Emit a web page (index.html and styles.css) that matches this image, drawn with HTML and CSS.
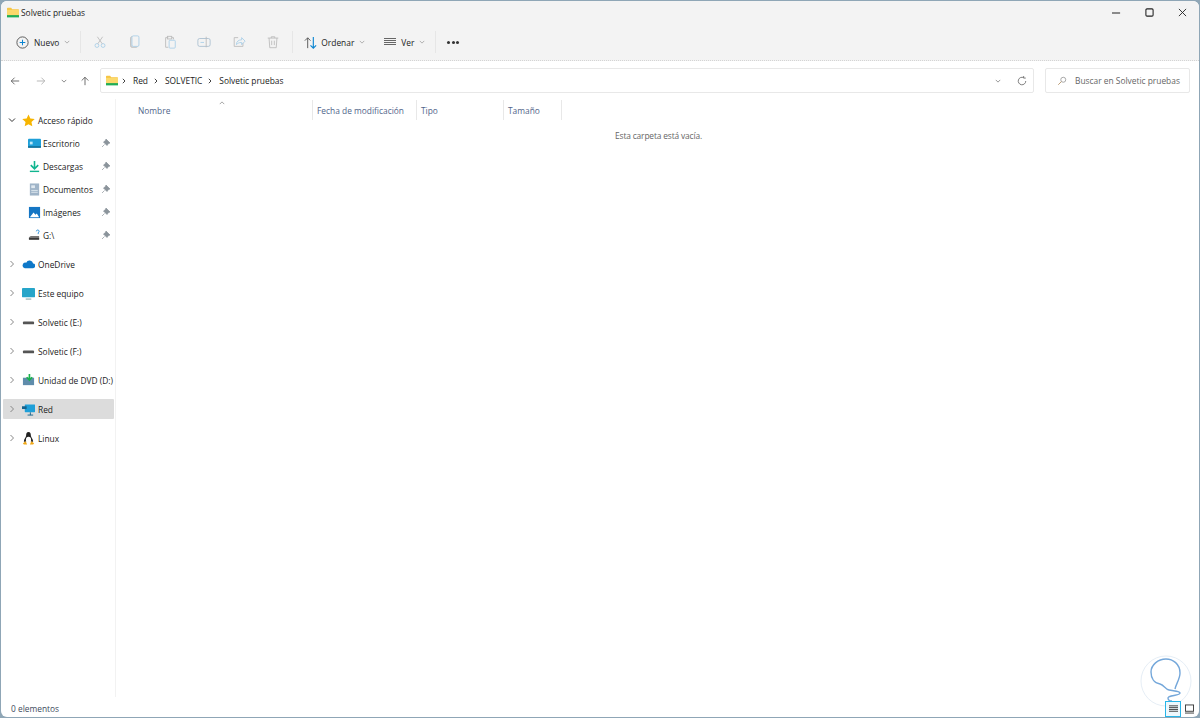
FILE: index.html
```html
<!DOCTYPE html>
<html lang="es">
<head>
<meta charset="utf-8">
<title>Solvetic pruebas</title>
<link rel="stylesheet" href="styles.css">
</head>
<body>
<div class="window">
  <header class="titlebar">
    <svg class="ti-folder" viewBox="0 0 16 14"><use href="#folder"/></svg>
    <span class="ti-text">Solvetic pruebas</span>
    <div class="winctl">
      <svg viewBox="0 0 10 10"><path d="M0 5.500h9" stroke="#222" stroke-width="1.200"/></svg>
      <svg viewBox="0 0 10 10"><rect x="1" y="1" width="8" height="8" rx="1.200" fill="none" stroke="#222" stroke-width="1.200"/></svg>
      <svg viewBox="0 0 10 10"><path d="M1 1l8 8M9 1l-8 8" stroke="#222" stroke-width="1"/></svg>
    </div>
  </header>

  <div class="toolbar">
    <div class="tb-btn new">
      <svg class="i16" viewBox="0 0 16 16"><circle cx="8" cy="8" r="6" fill="none" stroke="#555" stroke-width="1"/><path d="M8 5v6M5 8h6" stroke="#0a84d0" stroke-width="1.100"/></svg>
      <span>Nuevo</span><svg class="chev" viewBox="0 0 8 5"><path d="M1 1l3 3 3-3" fill="none" stroke="#999"/></svg>
    </div>
    <i class="sep sep1"></i>
    <div class="tb-icons">
      <svg viewBox="0 0 16 16" fill="none" stroke="#a9cfe8"><circle cx="4.500" cy="12" r="2.200"/><circle cx="11.500" cy="12" r="2.200"/><path d="M5.500 10L11 2M10.500 10L5 2" stroke="#bbb"/></svg>
      <svg viewBox="0 0 16 16" fill="none"><rect x="3" y="2" width="8" height="12" rx="1.500" stroke="#bbb" fill="#ddd"/><rect x="4.500" y="1" width="8" height="12" rx="1.500" stroke="#a9cfe8" fill="#f3f3f3"/></svg>
      <svg viewBox="0 0 16 16" fill="none"><path d="M6 3H3v11h3" stroke="#bbb"/><rect x="5" y="1.500" width="5" height="3" stroke="#bbb"/><path d="M10 3h2v2" stroke="#bbb"/><rect x="7" y="6" width="7" height="9" rx="1" stroke="#a9cfe8"/></svg>
      <svg viewBox="0 0 16 16" fill="none"><rect x="1" y="4" width="14" height="9" rx="2" stroke="#a9bfd0"/><path d="M4 8.500h4" stroke="#a9cfe8"/><path d="M10.500 2v12" stroke="#bbb"/></svg>
      <svg viewBox="0 0 16 16" fill="none"><path d="M7 3H2.500v10h10V9" stroke="#bbb"/><path d="M5 11c0-4 3-5.500 6-5.500V3l4 4-4 4V8.500c-3 0-4.500 1-6 2.500z" stroke="#a9cfe8"/></svg>
      <svg viewBox="0 0 16 16" fill="none" stroke="#bbb"><path d="M2 3.500h12M6 3.500V2h4v1.500M3.500 3.500l.8 11h7.400l.8-11M6.500 6.500v5M9.500 6.500v5"/></svg>
    </div>
    <i class="sep sep2"></i>
    <div class="tb-btn sort">
      <svg class="i16" viewBox="0 0 16 16" fill="none"><path d="M5 14V3M2 6l3-3 3 3" stroke="#555"/><path d="M11 2v12M8 11l3 3 3-3" stroke="#0a84d0" stroke-width="1.200"/></svg>
      <span>Ordenar</span><svg class="chev" viewBox="0 0 8 5"><path d="M1 1l3 3 3-3" fill="none" stroke="#999"/></svg>
    </div>
    <div class="tb-btn view">
      <svg class="wide" viewBox="0 0 14 10" fill="none" stroke="#666"><path d="M1 1.500h12M1 3.500h12M1 5.500h12M1 7.500h12"/></svg>
      <span>Ver</span><svg class="chev" viewBox="0 0 8 5"><path d="M1 1l3 3 3-3" fill="none" stroke="#999"/></svg>
    </div>
    <i class="sep sep3"></i>
    <div class="more"><b></b><b></b><b></b></div>
  </div>

  <nav class="navrow">
    <div class="arrows">
      <svg viewBox="0 0 12 12" fill="none" stroke="#555"><path d="M11 6H1.500M5.500 2l-4 4 4 4"/></svg>
      <svg class="dim" viewBox="0 0 12 12" fill="none" stroke="#aaa"><path d="M1 6h9.500M6.500 2l4 4-4 4"/></svg>
      <svg class="small" viewBox="0 0 8 5" fill="none" stroke="#666"><path d="M1 1l3 3 3-3"/></svg>
      <svg viewBox="0 0 12 12" fill="none" stroke="#555"><path d="M6 11V1.500M2 5.500l4-4 4 4"/></svg>
    </div>
    <div class="address">
      <svg class="ad-folder" viewBox="0 0 16 14"><use href="#folder"/></svg>
      <svg class="crumb" viewBox="0 0 4 6" fill="none" stroke="#444"><path d="M.8.8L3 3 .8 5.200"/></svg><span>Red</span>
      <svg class="crumb" viewBox="0 0 4 6" fill="none" stroke="#444"><path d="M.8.8L3 3 .8 5.200"/></svg><span>SOLVETIC</span>
      <svg class="crumb" viewBox="0 0 4 6" fill="none" stroke="#444"><path d="M.8.8L3 3 .8 5.200"/></svg><span>Solvetic pruebas</span>
      <span class="grow"></span>
      <svg class="ad-chev" viewBox="0 0 8 5" fill="none" stroke="#777"><path d="M1 1l3 3 3-3"/></svg>
      <svg class="ad-ref" viewBox="0 0 12 12" fill="none" stroke="#666"><path d="M10.500 6A4.500 4.500 0 1 1 8 2M8 0v2.500h2.500"/></svg>
    </div>
    <div class="search">
      <svg viewBox="0 0 12 12" fill="none" stroke="#999"><circle cx="7.500" cy="4.500" r="3"/><path d="M5.300 6.700L1.500 10.500" stroke="#b08a5a"/></svg>
      <span>Buscar en Solvetic pruebas</span>
    </div>
  </nav>

  <div class="body">
    <aside class="sidebar">
      <div class="row top first"><svg class="tw" viewBox="0 0 8 8" fill="none" stroke="#333"><path d="M1 2.500l3 3 3-3"/></svg>
        <svg class="ico" viewBox="0 0 14 14"><path d="M7 .5l2 4.300 4.700.6-3.500 3.200.9 4.700L7 11l-4.100 2.300.9-4.700L.3 5.400 5 4.800z" fill="#f7b500"/></svg><span>Acceso rápido</span></div>
      <div class="row sub"><svg class="ico" viewBox="0 0 14 14"><rect x="0" y="2" width="14" height="9.500" rx="1" fill="#1e9fd8"/><rect x="2" y="5" width="3" height="3" fill="#bfe8f8"/><rect y="10" width="14" height="1.500" fill="#12688f"/></svg><span class="lbl">Escritorio</span><svg class="pin" viewBox="0 0 10 10"><path d="M5 1l4 4-1.500.5L6 7.500 2.500 4 4.500 2.500zM3.500 6.500L1 9" fill="#8b949b" stroke="#8b949b" stroke-width=".7"/></svg></div>
      <div class="row sub"><svg class="ico" viewBox="0 0 14 14"><path d="M7 1v8M3 5.500L7 9.500l4-4" fill="none" stroke="#10b58f" stroke-width="1.700"/><rect x="2" y="11.500" width="10" height="1.500" fill="#10b58f"/></svg><span class="lbl">Descargas</span><svg class="pin" viewBox="0 0 10 10"><path d="M5 1l4 4-1.500.5L6 7.500 2.500 4 4.500 2.500zM3.500 6.500L1 9" fill="#8b949b" stroke="#8b949b" stroke-width=".7"/></svg></div>
      <div class="row sub"><svg class="ico" viewBox="0 0 14 14"><rect x="2" y=".5" width="10" height="13" fill="#9fb4c8"/><rect x="3.500" y="2.500" width="4" height="3" fill="#dfe8ef"/><path d="M3.500 8h7M3.500 10h7" stroke="#dfe8ef"/></svg><span class="lbl">Documentos</span><svg class="pin" viewBox="0 0 10 10"><path d="M5 1l4 4-1.500.5L6 7.500 2.500 4 4.500 2.500zM3.500 6.500L1 9" fill="#8b949b" stroke="#8b949b" stroke-width=".7"/></svg></div>
      <div class="row sub"><svg class="ico" viewBox="0 0 14 14"><rect x="1" y="1" width="12" height="12" fill="#1576c4"/><path d="M2 12l4-5 2 2.500 1.500-1.500L12 12z" fill="#fff"/></svg><span class="lbl">Imágenes</span><svg class="pin" viewBox="0 0 10 10"><path d="M5 1l4 4-1.500.5L6 7.500 2.500 4 4.500 2.500zM3.500 6.500L1 9" fill="#8b949b" stroke="#8b949b" stroke-width=".7"/></svg></div>
      <div class="row sub"><svg class="ico" viewBox="0 0 14 14"><path d="M1 9l2-1.500h9V11H1z" fill="#777"/><rect x="1" y="10" width="11" height="1.500" fill="#222"/><path d="M9 2.500a1.500 1.500 0 1 1 2 1.500v1.500" fill="none" stroke="#2a8fd8"/></svg><span class="lbl">G:\</span><svg class="pin" viewBox="0 0 10 10"><path d="M5 1l4 4-1.500.5L6 7.500 2.500 4 4.500 2.500zM3.500 6.500L1 9" fill="#8b949b" stroke="#8b949b" stroke-width=".7"/></svg></div>

      <div class="row top"><svg class="tw" viewBox="0 0 8 8" fill="none" stroke="#888"><path d="M2.500 1l3 3-3 3"/></svg><svg class="ico" viewBox="0 0 14 14"><path d="M3 11h8.500a2.500 2.500 0 0 0 .5-5A4 4 0 0 0 4.500 5 3 3 0 0 0 3 11z" fill="#0f78c8"/></svg><span>OneDrive</span></div>
      <div class="row top"><svg class="tw" viewBox="0 0 8 8" fill="none" stroke="#888"><path d="M2.500 1l3 3-3 3"/></svg><svg class="ico" viewBox="0 0 14 14"><rect x="0" y="1" width="14" height="10" rx=".5" fill="#26a5c9"/><path d="M4 13h6" stroke="#8aa" stroke-width="1.200"/></svg><span>Este equipo</span></div>
      <div class="row top"><svg class="tw" viewBox="0 0 8 8" fill="none" stroke="#888"><path d="M2.500 1l3 3-3 3"/></svg><svg class="ico" viewBox="0 0 14 14"><rect x="1" y="6" width="12" height="3" rx="1" fill="#555"/></svg><span>Solvetic (E:)</span></div>
      <div class="row top"><svg class="tw" viewBox="0 0 8 8" fill="none" stroke="#888"><path d="M2.500 1l3 3-3 3"/></svg><svg class="ico" viewBox="0 0 14 14"><rect x="1" y="6" width="12" height="3" rx="1" fill="#555"/></svg><span>Solvetic (F:)</span></div>
      <div class="row top"><svg class="tw" viewBox="0 0 8 8" fill="none" stroke="#888"><path d="M2.500 1l3 3-3 3"/></svg><svg class="ico" viewBox="0 0 14 14"><rect x="1" y="4" width="12" height="8" fill="#5f8cab"/><path d="M8 0v6M5 3.500L8 6.500 11 3.500" fill="none" stroke="#18b24c" stroke-width="1.800"/></svg><span>Unidad de DVD (D:)</span></div>
      <div class="row top sel"><svg class="tw" viewBox="0 0 8 8" fill="none" stroke="#888"><path d="M2.500 1l3 3-3 3"/></svg><svg class="ico" viewBox="0 0 14 14"><rect x="3" y="1.500" width="11" height="8.500" rx=".5" fill="#1e9fd8"/><rect x="0" y="3.500" width="5" height="3" fill="#13628c"/><path d="M6 13h6M9 10v3" stroke="#13628c"/></svg><span>Red</span></div>
      <div class="row top"><svg class="tw" viewBox="0 0 8 8" fill="none" stroke="#888"><path d="M2.500 1l3 3-3 3"/></svg><svg class="ico" viewBox="0 0 14 14"><path d="M7 0C5 0 4.500 1.500 4.500 3.500c0 2-2.500 4-2.500 7h10c0-3-2.500-5-2.500-7C9.500 1.500 9 0 7 0z" fill="#222"/><ellipse cx="7" cy="8.500" rx="2.800" ry="3.500" fill="#fff"/><path d="M1 12l3-2 1.500 3.500H2zM13 12l-3-2-1.500 3.500H12z" fill="#f0a818"/></svg><span>Linux</span></div>
    </aside>

    <main class="content">
      <svg class="sort-up" viewBox="0 0 8 5" fill="none" stroke="#888"><path d="M1 4l3-3 3 3"/></svg>
      <div class="cols">
        <div class="col c-name">Nombre</div>
        <div class="col c-date">Fecha de modificación</div>
        <div class="col c-type">Tipo</div>
        <div class="col c-size">Tamaño</div>
      </div>
      <p class="empty">Esta carpeta está vacía.</p>
    </main>
  </div>

  <footer class="status"><span>0 elementos</span></footer>
</div>

<svg class="watermark" viewBox="0 0 52 54" fill="none">
  <circle cx="26" cy="27" r="25" stroke="#e6eef6" stroke-width="1"/>
  <path d="M35 35C36 30 40 25 40 19C40 10 33 5 26 5C18 5 11 11 11 18C11 24 14 29 20 30C24 31 25 35 29 36C33 37 40 37 40 39C40 42 28 41 28 44C28 46 30 47 32 47" stroke="#74a7da" stroke-width="1.400"/>
</svg>
<div class="viewbtns">
  <div class="vb on"><svg viewBox="0 0 10 10" fill="none" stroke="#333"><path d="M0 1.500h10M0 3.500h10M0 5.500h10M0 7.500h10"/></svg></div>
  <div class="vb"><svg viewBox="0 0 10 10" fill="none" stroke="#333"><rect x=".5" y=".5" width="9" height="7"/><path d="M0 9.500h10"/></svg></div>
</div>

<svg class="defs" width="0" height="0">
  <defs>
    <g id="folder">
      <path d="M0 1.500A1 1 0 0 1 1 .5h4.500l1.500 2h8a1 1 0 0 1 1 1V13H0z" fill="#f6c544"/>
      <rect y="3.500" width="16" height="7" fill="#fbd96b"/>
      <rect x="0" y="10.500" width="16" height="3" fill="#1fae57"/>
    </g>
  </defs>
</svg>
</body>
</html>
```
FILE: styles.css
```css
* { box-sizing: border-box; }
html, body { margin: 0; height: 100%; overflow: hidden; }
body {
  background: #8fa6b6;
  font-family: "Open Sans", "Noto Sans", sans-serif;
  font-size: 8.4px;
  color: #222;
}
svg { display: block; flex: none; }
.defs { position: absolute; }

.window {
  height: 716px;
  margin: 1px;
  background: #fff;
  border-radius: 6px;
  display: flex;
  flex-direction: column;
  overflow: hidden;
}

.titlebar {
  height: 23px;
  background: #f3f3f3;
  display: flex;
  align-items: center;
  padding: 0 0 1px 6px;
}
.ti-folder { width: 12px; height: 11px; margin-right: 2px; }
.winctl { margin-left: auto; display: flex; }
.winctl svg { width: 9px; height: 9px; margin-right: 24px; }
.winctl svg:last-child { margin-right: 12px; }

.toolbar {
  height: 37px;
  background: #f3f3f3;
  border-bottom: 1px dotted #d4d4d4;
  display: flex;
  align-items: center;
  padding-left: 14px;
}
.tb-btn { display: flex; align-items: center; }
.i16 { width: 15px; height: 15px; }
.chev { width: 6px; height: 4px; margin-left: 5px; }
.new span { margin-left: 4px; }
.sep { width: 1px; height: 22px; background: #e6e6e6; }
.sep1 { margin-left: 10px; }
.tb-icons { display: flex; gap: 20.6px; margin-left: 12px; }
.tb-icons svg { width: 14px; height: 14px; }
.sep2 { margin-left: 12px; }
.sort { margin-left: 10px; }
.sort span { margin-left: 3px; }
.view { margin-left: 18px; }
.view span { margin-left: 4px; }
.wide { width: 14px; height: 10px; }
.sep3 { margin-left: 10px; }
.more { display: flex; gap: 1.5px; margin-left: 11px; }
.more b { width: 3px; height: 3px; background: #333; border-radius: 50%; }

.navrow {
  height: 38px;
  display: flex;
  align-items: center;
  padding-right: 9px;
  padding-top: 1px;
}
.arrows { display: flex; align-items: center; width: 99px; padding-left: 9px; }
.arrows svg { width: 10px; height: 10px; margin-right: 16px; }
.arrows .small { width: 6px; height: 4px; margin-right: 13px; margin-left: -1px; }
.address {
  width: 934px;
  height: 25px;
  border: 1px solid #e8e8e8;
  border-radius: 2px;
  display: flex;
  align-items: center;
  padding: 0 5px;
}
.ad-folder { width: 12px; height: 11px; margin-right: 4px; }
.crumb { width: 4px; height: 6px; margin-right: 7px; }
.address span:not(.grow) { margin-right: 6px; }
.grow { flex: 1; }
.ad-chev { width: 6px; height: 4px; margin-right: 16px; }
.ad-ref { width: 10px; height: 10px; margin-right: 1px; }
.search {
  width: 145px;
  height: 25px;
  margin-left: 11px;
  border: 1px solid #e8e8e8;
  border-radius: 2px;
  display: flex;
  align-items: center;
  padding-left: 11px;
  color: #666;
}
.search svg { width: 10px; height: 10px; margin-right: 8px; }

.body { flex: 1; display: flex; min-height: 0; }
.sidebar {
  width: 115px;
  border-right: 1px solid #f2f2f2;
  padding-left: 2px;
}
.row { display: flex; align-items: center; height: 20px; margin-right: 1px; border-radius: 1px; white-space: nowrap; }
.row.sub { margin-top: 3px; padding-left: 25px; padding-right: 3px; }
.row.top { margin-top: 9px; padding-left: 5px; }
.row.first { margin-top: 11px; }
.row.sel { background: #dcdcdc; }
.row .tw { width: 8px; height: 8px; margin-right: 6px; }
.row .ico { width: 13px; height: 13px; margin-right: 3px; }
.row.sub .ico { margin-right: 2px; }
.lbl { flex: 1; }
.pin { width: 10px; height: 10px; }

.content { flex: 1; position: relative; min-width: 0; }
.sort-up { position: absolute; left: 103px; top: 2px; width: 6px; height: 4px; }
.cols { display: flex; height: 20px; margin-top: 1px; align-items: center; color: #51658a; }
.col { height: 20px; display: flex; align-items: center; padding-left: 4px; border-right: 1px solid #e8e8e8; }
.c-name { width: 197px; padding-left: 22px; }
.c-date { width: 104px; }
.c-type { width: 87px; }
.c-size { width: 58px; }
.empty { margin: 10px 0 0; width: 1085px; text-align: center; color: #666; letter-spacing: -0.15px; }

.status { height: 20px; display: flex; align-items: center; padding: 3px 0 0 10px; color: #3e4b5e; }

.watermark { position: absolute; left: 1140px; top: 654px; width: 52px; height: 54px; }
.viewbtns { position: absolute; left: 1165px; top: 701px; display: flex; align-items: center; }
.vb { width: 16px; height: 16px; display: flex; align-items: center; justify-content: center; }
.vb svg { width: 9px; height: 10px; }
.vb.on { border: 1px solid #27b5e8; background: #eef8fd; }
```
